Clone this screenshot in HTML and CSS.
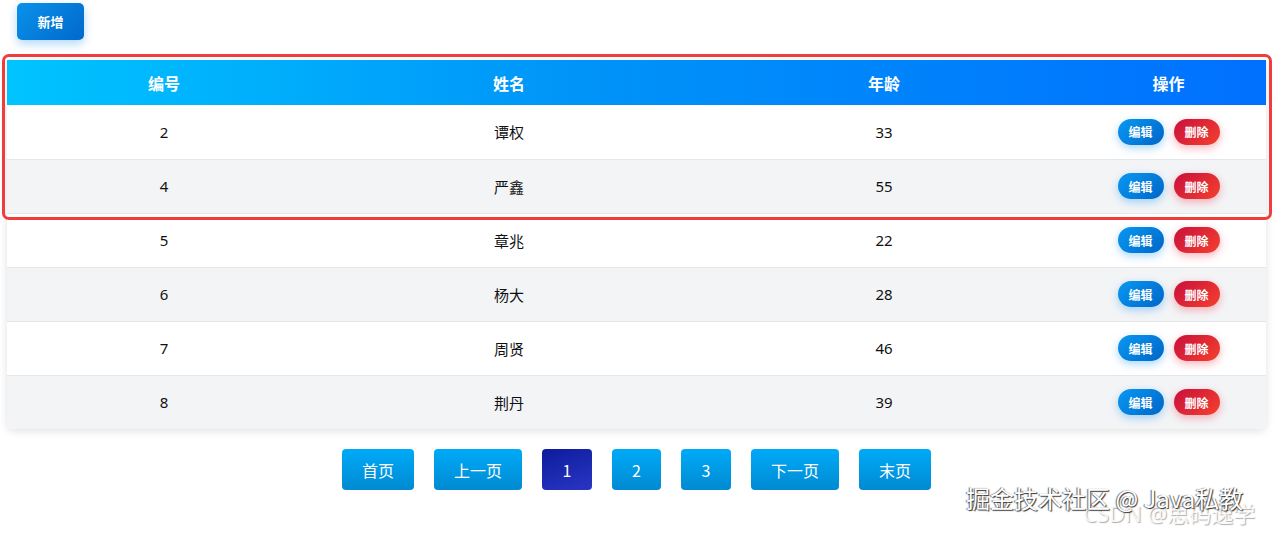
FILE: index.html
```html
<!DOCTYPE html>
<html lang="zh">
<head>
<meta charset="utf-8">
<title>表格</title>
<link rel="stylesheet" href="styles.css">
</head>
<body>
<div class="page">
  <div class="toolbar">
    <button class="btn-add">新增</button>
  </div>
  <div class="table-wrap">
    <table class="grid">
      <colgroup>
        <col class="c1"><col class="c2"><col class="c3"><col class="c4">
      </colgroup>
      <thead>
        <tr><th>编号</th><th>姓名</th><th>年龄</th><th>操作</th></tr>
      </thead>
      <tbody>
        <tr><td>2</td><td>谭权</td><td>33</td><td><div class="ops"><button class="btn-edit">编辑</button><button class="btn-del">删除</button></div></td></tr>
        <tr><td>4</td><td>严鑫</td><td>55</td><td><div class="ops"><button class="btn-edit">编辑</button><button class="btn-del">删除</button></div></td></tr>
        <tr><td>5</td><td>章兆</td><td>22</td><td><div class="ops"><button class="btn-edit">编辑</button><button class="btn-del">删除</button></div></td></tr>
        <tr><td>6</td><td>杨大</td><td>28</td><td><div class="ops"><button class="btn-edit">编辑</button><button class="btn-del">删除</button></div></td></tr>
        <tr><td>7</td><td>周贤</td><td>46</td><td><div class="ops"><button class="btn-edit">编辑</button><button class="btn-del">删除</button></div></td></tr>
        <tr><td>8</td><td>荆丹</td><td>39</td><td><div class="ops"><button class="btn-edit">编辑</button><button class="btn-del">删除</button></div></td></tr>
      </tbody>
    </table>
  </div>
  <div class="pager">
    <button class="pg w72">首页</button>
    <button class="pg w88">上一页</button>
    <button class="pg w50 active">1</button>
    <button class="pg w49">2</button>
    <button class="pg w50">3</button>
    <button class="pg w88">下一页</button>
    <button class="pg w72">末页</button>
  </div>
</div>
<div class="highlight"></div>
<div class="watermark">
  <span class="wm-sub">CSDN @思码逸学</span>
  <span class="wm-main">掘金技术社区 @ Java私教</span>
</div>
</body>
</html>
```

FILE: styles.css
```css
* { box-sizing: border-box; }
html, body { margin: 0; padding: 0; background: #fff; }
body {
  font-family: "Noto Sans", "Noto Sans CJK SC", sans-serif;
  color: #111;
  width: 1274px;
  height: 534px;
  overflow: hidden;
  position: relative;
}
.page { padding: 3px 8px 0 7px; }
.toolbar { padding-left: 10px; height: 57px; }
.btn-add {
  width: 67px;
  height: 37px;
  border: none;
  border-radius: 5px;
  background: linear-gradient(135deg, #0a92ea 0%, #0068cc 100%);
  color: #fff;
  font-family: "Noto Sans CJK SC", sans-serif;
  font-weight: 700;
  font-size: 13px;
  box-shadow: 0 4px 10px rgba(0, 130, 230, 0.3);
  padding: 0;
}
.table-wrap {
  width: 1259px;
  border-radius: 0 0 6px 6px;
  box-shadow: 0 2px 8px rgba(0, 0, 0, 0.12);
  overflow: hidden;
}
.grid {
  width: 100%;
  border-collapse: collapse;
  table-layout: fixed;
}
.c1 { width: 314px; }
.c2 { width: 376px; }
.c3 { width: 374px; }
.c4 { width: 195px; }
.grid thead tr {
  background: linear-gradient(90deg, #00c4ff 0%, #0094f8 45%, #0070ff 100%);
}
.grid th {
  height: 45px;
  color: #fff;
  font-family: "Noto Sans CJK SC", sans-serif;
  font-weight: 700;
  font-size: 16px;
  text-align: center;
  padding: 0;
}
.grid td {
  height: 54px;
  text-align: center;
  font-size: 15px;
  padding: 0;
  font-family: "Noto Sans", "Noto Sans CJK SC", sans-serif;
}
.grid tbody tr { background: #fff; border-bottom: 1px solid #e4e6ea; }
.grid tbody tr:nth-child(even) { background: #f3f4f6; }
.grid tbody tr:last-child { border-bottom: none; }
.ops {
  display: flex;
  justify-content: center;
  gap: 10px;
}
.btn-edit, .btn-del {
  width: 46px;
  height: 26px;
  border: none;
  border-radius: 13px;
  color: #fff;
  font-family: "Noto Sans CJK SC", sans-serif;
  font-weight: 700;
  font-size: 12px;
  padding: 0;
}
.btn-edit {
  background: linear-gradient(135deg, #0898f2 0%, #0066c8 100%);
  box-shadow: 0 3px 8px rgba(0, 140, 240, 0.35);
}
.btn-del {
  background: linear-gradient(135deg, #c8103c 0%, #f5402e 100%);
  box-shadow: 0 3px 8px rgba(240, 40, 60, 0.35);
}
.pager {
  display: flex;
  justify-content: center;
  gap: 20px;
  margin-top: 20px;
}
.pg {
  height: 41px;
  border: none;
  border-radius: 4px;
  background: linear-gradient(180deg, #00aaf8 0%, #008ad2 100%);
  color: #fff;
  font-family: "Noto Sans CJK SC", sans-serif;
  font-size: 16px;
  padding: 0;
}
.pg.active { background: linear-gradient(160deg, #0c1c9c 0%, #2a36c4 100%); }
.w72 { width: 72px; }
.w88 { width: 88px; }
.w50 { width: 50px; }
.w49 { width: 49px; }
.highlight {
  position: absolute;
  left: 2px;
  top: 54px;
  width: 1270px;
  height: 166px;
  border: 3px solid #f03c3c;
  border-radius: 7px;
  pointer-events: none;
}
.watermark {
  position: absolute;
  left: 0;
  top: 0;
  width: 1274px;
  height: 534px;
  pointer-events: none;
}
.wm-main {
  position: absolute;
  left: 966px;
  top: 484px;
  font-family: "Noto Sans CJK SC", sans-serif;
  font-size: 24px;
  line-height: 28px;
  color: #fff;
  text-shadow: 1px 1px 1px #333, -1px 0 1px #666;
  white-space: nowrap;
}
.wm-sub {
  position: absolute;
  left: 1083px;
  top: 500px;
  font-family: "Noto Sans", "Noto Sans CJK SC", sans-serif;
  font-size: 22px;
  line-height: 26px;
  color: rgba(255, 255, 255, 0.85);
  text-shadow: 1px 1px 1px rgba(80, 80, 80, 0.45);
  white-space: nowrap;
}
```
